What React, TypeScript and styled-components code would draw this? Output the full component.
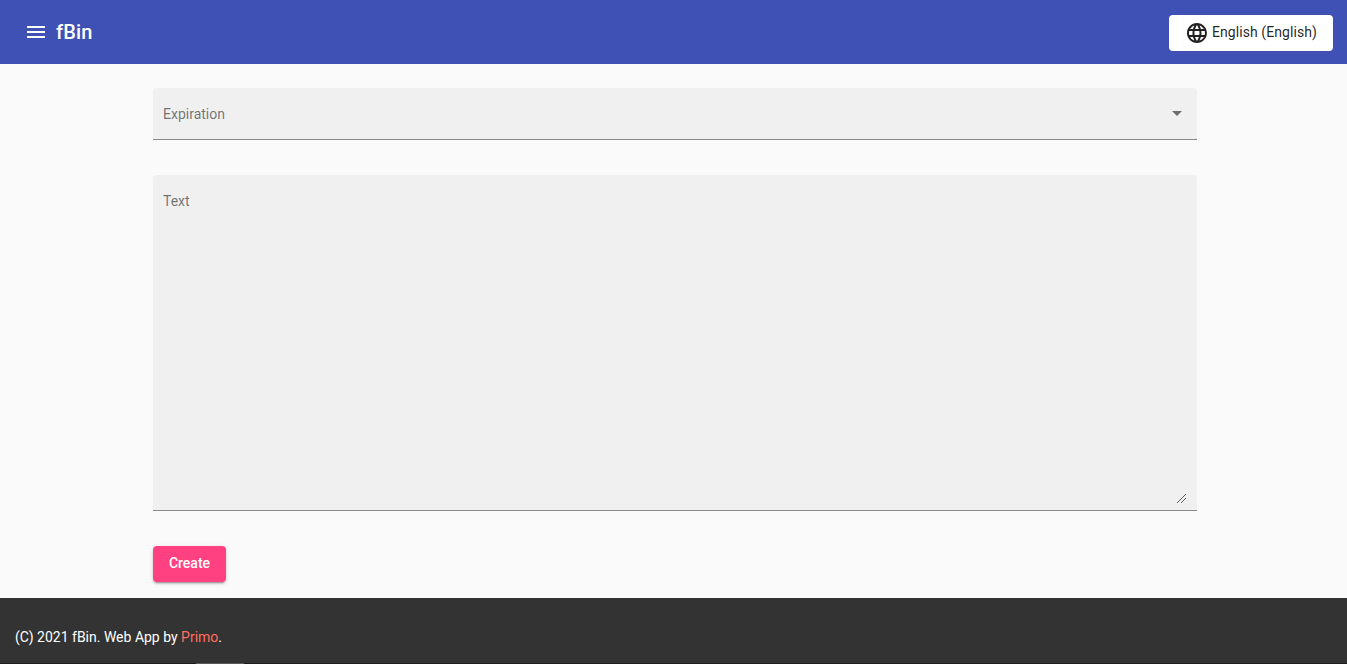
import * as React from 'react';
import styled, { createGlobalStyle } from 'styled-components';

// pixel steps of the browser's textarea resize handle
const gripPixels = [
  [0, 8], [1, 7], [2, 6], [3, 5], [4, 4], [5, 3], [6, 2], [7, 1], [8, 0],
  [4, 8], [5, 7], [6, 6], [7, 5], [8, 4],
];

const App = () => (
  <Page>
    <GlobalStyle />
    <AppBar>
      <MenuButton aria-label="menu">
        <svg width="24" height="24" viewBox="0 0 24 24" fill="currentColor">
          <path d="M3 18h18v-2H3v2zm0-5h18v-2H3v2zm0-7v2h18V6H3z" />
        </svg>
      </MenuButton>
      <Title>fBin</Title>
      <LanguageButton>
        <svg width="24" height="24" viewBox="0 0 24 24" fill="currentColor">
          <path d="M11.99 2C6.47 2 2 6.48 2 12s4.47 10 9.99 10C17.52 22 22 17.52 22 12S17.52 2 11.99 2zm6.93 6h-2.95c-.32-1.25-.78-2.45-1.38-3.56 1.84.63 3.37 1.91 4.33 3.56zM12 4.04c.83 1.2 1.48 2.53 1.91 3.96h-3.82c.43-1.43 1.08-2.76 1.91-3.96zM4.26 14C4.1 13.36 4 12.69 4 12s.1-1.36.26-2h3.38c-.08.66-.14 1.32-.14 2 0 .68.06 1.34.14 2H4.26zm.82 2h2.95c.32 1.25.78 2.45 1.38 3.56-1.84-.63-3.37-1.9-4.33-3.56zm2.95-8H5.08c.96-1.66 2.49-2.93 4.33-3.56C8.81 5.55 8.35 6.75 8.03 8zM12 19.96c-.83-1.2-1.48-2.53-1.91-3.96h3.82c-.43 1.43-1.08 2.76-1.91 3.96zM14.34 14H9.66c-.09-.66-.16-1.32-.16-2 0-.68.07-1.35.16-2h4.68c.09.65.16 1.32.16 2 0 .68-.07 1.34-.16 2zm.25 5.56c.6-1.11 1.06-2.31 1.38-3.56h2.95c-.96 1.65-2.49 2.93-4.33 3.56zM16.36 14c.08-.66.14-1.32.14-2 0-.68-.06-1.34-.14-2h3.38c.16.64.26 1.31.26 2s-.1 1.36-.26 2h-3.38z" />
        </svg>
        <LanguageName>English (English)</LanguageName>
      </LanguageButton>
    </AppBar>
    <Main>
      <SelectField>
        <FieldLabel>Expiration</FieldLabel>
        <SelectArrow viewBox="0 0 24 24" width="24" height="24" fill="currentColor">
          <path d="M7 10l5 5 5-5z" />
        </SelectArrow>
      </SelectField>
      <TextField>
        <FieldLabel>Text</FieldLabel>
        <ResizeGrip viewBox="0 0 9 9" width="9" height="9" fill="#5a5a5a" shapeRendering="crispEdges">
          {gripPixels.map(([x, y]) => (
            <rect key={`${x}-${y}`} x={x} y={y} width="1" height="1" />
          ))}
        </ResizeGrip>
      </TextField>
      <CreateButton>Create</CreateButton>
    </Main>
    <Footer>
      <span>
        (C) 2021 fBin. Web App by <FooterLink>Primo</FooterLink>.
      </span>
      <FooterMark />
    </Footer>
  </Page>
);

const GlobalStyle = createGlobalStyle`
  html, body {
    margin: 0;
    padding: 0;
    height: 100%;
    background: #fafafa;
    font-family: Roboto, "Liberation Sans", sans-serif;
  }
`;

const Page = styled.div`
  display: flex;
  flex-direction: column;
  height: 664px;
  overflow: hidden;
`;

const AppBar = styled.header`
  display: flex;
  align-items: center;
  height: 64px;
  flex-shrink: 0;
  padding: 0 14px 0 24px;
  box-sizing: border-box;
  background-color: #3f51b5;
  color: #fff;
`;

const MenuButton = styled.button`
  display: flex;
  padding: 0;
  margin-right: 8px;
  border: none;
  background: none;
  color: inherit;
`;

const Title = styled.div`
  flex: 1;
  font-size: 20px;
  font-weight: 500;
  line-height: 32px;
  letter-spacing: 0.15px;
`;

const LanguageButton = styled.button`
  display: flex;
  align-items: center;
  gap: 3px;
  width: 164px;
  height: 36px;
  margin-top: 2px;
  padding: 0 16px;
  border: none;
  border-radius: 4px;
  background-color: #fff;
  color: rgba(0, 0, 0, 0.87);
  font-family: inherit;
  font-size: 14px;
  letter-spacing: 0.08px;
  white-space: nowrap;
  box-sizing: border-box;
`;

const LanguageName = styled.span`
  margin-bottom: 2px;
`;

const Main = styled.main`
  flex: 1;
  display: flex;
  flex-direction: column;
  align-items: flex-start;
  padding: 24px 150px 0 153px;
`;

const FilledField = styled.div`
  position: relative;
  width: 100%;
  padding: 18px 10px 0;
  box-sizing: border-box;
  background-color: rgba(0, 0, 0, 0.04);
  border-bottom: 1px solid #8a8a8a;
  border-radius: 4px 4px 0 0;
`;

const SelectField = styled(FilledField)`
  height: 52px;
  margin-bottom: 35px;
`;

const TextField = styled(FilledField)`
  height: 336px;
  margin-bottom: 35px;
`;

const FieldLabel = styled.span`
  display: block;
  font-size: 14px;
  line-height: 16px;
  color: rgba(0, 0, 0, 0.54);
`;

const SelectArrow = styled.svg`
  position: absolute;
  top: 13px;
  right: 8px;
  color: rgba(0, 0, 0, 0.54);
`;

const ResizeGrip = styled.svg`
  position: absolute;
  right: 11px;
  bottom: 7px;
`;

const CreateButton = styled.button`
  width: 73px;
  height: 36px;
  padding: 0 0 2px;
  border: none;
  border-radius: 4px;
  background-color: #ff4081;
  color: #fff;
  font-family: inherit;
  font-size: 14px;
  font-weight: 500;
  box-shadow: 0 3px 1px -2px rgba(0, 0, 0, 0.2), 0 2px 2px 0 rgba(0, 0, 0, 0.14), 0 1px 5px 0 rgba(0, 0, 0, 0.12);
`;

const Footer = styled.footer`
  position: relative;
  display: flex;
  flex-shrink: 0;
  height: 66px;
  padding: 31px 15px 0;
  box-sizing: border-box;
  background-color: #333;
  border-bottom: 1px solid #1c1c1c;
  color: #fff;
  font-size: 14px;
  line-height: 16px;
`;

const FooterLink = styled.a`
  color: #ff6e60;
`;

const FooterMark = styled.div`
  position: absolute;
  left: 196px;
  bottom: -1px;
  width: 48px;
  height: 1px;
  background-color: #5a5a5a;
`;

export default App;
